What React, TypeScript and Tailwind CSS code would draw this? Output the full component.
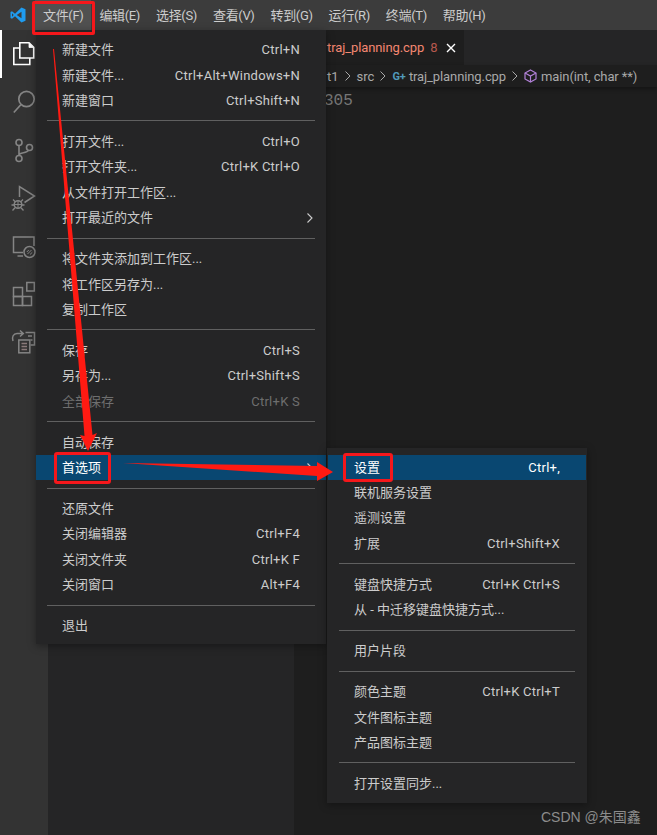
import React from "react";

const FONT = "font-['Roboto','Noto_Sans_CJK_SC',sans-serif]";

type Item = { t?: string; k?: string; sep?: boolean; arrow?: boolean; dis?: boolean; hi?: boolean };

const mainMenu: Item[] = [
  { t: "新建文件", k: "Ctrl+N" },
  { t: "新建文件...", k: "Ctrl+Alt+Windows+N" },
  { t: "新建窗口", k: "Ctrl+Shift+N" },
  { sep: true },
  { t: "打开文件...", k: "Ctrl+O" },
  { t: "打开文件夹...", k: "Ctrl+K Ctrl+O" },
  { t: "从文件打开工作区..." },
  { t: "打开最近的文件", arrow: true },
  { sep: true },
  { t: "将文件夹添加到工作区..." },
  { t: "将工作区另存为..." },
  { t: "复制工作区" },
  { sep: true },
  { t: "保存", k: "Ctrl+S" },
  { t: "另存为...", k: "Ctrl+Shift+S" },
  { t: "全部保存", k: "Ctrl+K S", dis: true },
  { sep: true },
  { t: "自动保存" },
  { t: "首选项", arrow: true, hi: true },
  { sep: true },
  { t: "还原文件" },
  { t: "关闭编辑器", k: "Ctrl+F4" },
  { t: "关闭文件夹", k: "Ctrl+K F" },
  { t: "关闭窗口", k: "Alt+F4" },
  { sep: true },
  { t: "退出" },
];

const subMenu: Item[] = [
  { t: "设置", k: "Ctrl+,", hi: true },
  { t: "联机服务设置" },
  { t: "遥测设置" },
  { t: "扩展", k: "Ctrl+Shift+X" },
  { sep: true },
  { t: "键盘快捷方式", k: "Ctrl+K Ctrl+S" },
  { t: "从 - 中迁移键盘快捷方式..." },
  { sep: true },
  { t: "用户片段" },
  { sep: true },
  { t: "颜色主题", k: "Ctrl+K Ctrl+T" },
  { t: "文件图标主题" },
  { t: "产品图标主题" },
  { sep: true },
  { t: "打开设置同步..." },
];

function MenuRows({ items }: { items: Item[] }) {
  return (
    <>
      {items.map((it, i) =>
        it.sep ? (
          <div key={i} className="h-[15.6px] flex items-center pl-[10.500px] pr-[11.500px]">
            <div className="h-px w-full bg-[#606060]" />
          </div>
        ) : (
          <div
            key={i}
            className={
              "h-[25.4px] flex items-center justify-between pl-[26px] pr-[26px] relative " +
              (it.hi ? "bg-[#094771] text-white " : "") +
              (it.dis ? "text-[#6e6e6e]" : it.hi ? "" : "text-[#cccccc]")
            }
          >
            <span>{it.t}</span>
            {it.k && <span className="tracking-[0.25px]">{it.k}</span>}
            {it.arrow && (
              <svg className="absolute right-[12px] top-[7px]" width="8" height="12" viewBox="0 0 8 12" fill="none">
                <path d="M1.500 1.500 6 6l-4.500 4.500" stroke="#cccccc" strokeWidth="1.100" />
              </svg>
            )}
          </div>
        )
      )}
    </>
  );
}

const titles = ["文件(F)", "编辑(E)", "选择(S)", "查看(V)", "转到(G)", "运行(R)", "终端(T)", "帮助(H)"];

function ActivityIcons() {
  const c = "#858585";
  return (
    <svg width="48" height="340" viewBox="0 30 48 340" fill="none" className="block">
      {/* files */}
      <g stroke="#ffffff" strokeWidth="1.600">
        <path d="M19.800 58V42.800H29L33.700 47.400V58Z" />
        <path d="M29 43v4.500h4.500V47L29 43Z" fill="#ffffff" strokeWidth="0.800" />
        <path d="M19.800 48H13.800V64.500H29.800V58" />
      </g>
      {/* search */}
      <g stroke={c} strokeWidth="1.700">
        <circle cx="26.500" cy="99" r="7.700" />
        <path d="M20.800 104.800 13.800 112.500" />
      </g>
      {/* git */}
      <g stroke={c} strokeWidth="1.600">
        <circle cx="19" cy="142.500" r="3" />
        <circle cx="29.500" cy="147.500" r="3" />
        <circle cx="19" cy="158.500" r="3" />
        <path d="M19 145.500v10M19 155c1-3.500 8-1 9.500-5" />
      </g>
      {/* debug */}
      <g stroke={c} strokeWidth="1.500">
        <path d="M19.500 197V186.500L34.500 196 24.500 202.500" />
        <circle cx="18" cy="204.500" r="3.800" fill="#333333" />
        <path d="M14.500 204.500h7M18 201v7" strokeWidth="1" />
        <path d="M13 199.500l2.500 2.500M23 199.500l-2.500 2.500M11.500 205h2.500M22 205h2.500M12.500 210.500l2.500-2.800M23.500 210.500l-2.500-2.800" strokeWidth="1.300" />
      </g>
      {/* remote */}
      <g stroke={c} strokeWidth="1.500">
        <path d="M23 252.500H13.500V237H34V246" />
        <path d="M17.500 256H23" />
        <circle cx="29.500" cy="252" r="5.500" />
        <path d="M27.500 254l4-4M26.800 252l2-2M30 254.500l2.300-2.200" strokeWidth="1" />
      </g>
      {/* extensions */}
      <g stroke={c} strokeWidth="1.500">
        <rect x="13.500" y="287.500" width="9" height="9" />
        <rect x="13.500" y="296.500" width="9" height="9" />
        <rect x="22.500" y="296.500" width="9" height="9" />
        <rect x="26.800" y="282.500" width="7.500" height="8.500" />
      </g>
      {/* timeline / docs */}
      <g stroke={c} strokeWidth="1.500">
        <path d="M25.500 332.500H34.500V345H30.500M28 336h4M30.500 340h2" />
        <rect x="18.800" y="340" width="11" height="12.800" fill="#333333" />
        <path d="M21.500 343.500h5.500M21.500 346.500h5.500M21.500 349.500h5.500" stroke="#8a7a7a" />
        <path d="M13 341c-1.500-4 .500-7.500 4-7.500h6M20 330.500l3.300 3-3.300 3" />
      </g>
    </svg>
  );
}

function VsLogo() {
  return (
    <svg width="16" height="16" viewBox="0 0 16 16">
      <path d="M11.500 0.500 5 6.700 2 4.300 0.500 5.100v5.800L2 11.700 5 9.300l6.500 6.200L15.500 13.700V2.300Z" fill="#1f9cf0" />
      <path d="M11.500 4.700 6.700 8l4.800 3.300Z" fill="#3c3c3c" />
      <path d="M2 6.200 3.700 8 2 9.800Z" fill="#3c3c3c" />
    </svg>
  );
}

function Chev() {
  return (
    <svg className="mx-[5px]" width="8" height="12" viewBox="0 0 8 12" fill="none">
      <path d="M1.500 1.500 6 6l-4.500 4.500" stroke="#a9a9a9" strokeWidth="1" />
    </svg>
  );
}

export default function App() {
  return (
    <div className={"relative w-[657px] h-[835px] overflow-hidden flex flex-col bg-[#1e1e1e] text-[13px] leading-none " + FONT}>
      {/* title bar */}
      <div className="h-[30px] bg-[#3c3c3c] flex items-center shrink-0 text-[#cccccc]">
        <div className="w-[35px] flex justify-center pl-[1px]">
          <VsLogo />
        </div>
        {titles.map((t, i) => (
          <div
            key={t}
            className={"h-[30px] px-[8px] flex items-center tracking-[-0.35px] " + (i === 0 ? "bg-[#505050]" : "")}
          >
            {t}
          </div>
        ))}
      </div>

      <div className="flex flex-1 min-h-0">
        {/* activity bar */}
        <div className="w-[48px] bg-[#333333] relative shrink-0">
          <ActivityIcons />
          <div className="absolute left-0 top-0 w-[2px] h-[48px] bg-white" />
        </div>
        {/* sidebar */}
        <div className="w-[246px] bg-[#252526] shrink-0" />
        {/* editor */}
        <div className="flex-1 min-w-0 flex flex-col bg-[#1e1e1e]">
          <div className="h-[35px] bg-[#252526] flex shrink-0">
            <div className="w-[170px] bg-[#1e1e1e] flex items-center pl-[33px] whitespace-nowrap">
              <span className="text-[#f48771] tracking-[-0.1px]">traj_planning.cpp</span>
              <span className="text-[#b5574d] ml-[6px]">8</span>
              <svg className="ml-[9px]" width="10" height="10" viewBox="0 0 10 10">
                <path d="M1 1l8 8M9 1l-8 8" stroke="#ffffff" strokeWidth="1.400" />
              </svg>
            </div>
          </div>
          <div className="h-[22px] flex items-center pl-[33px] text-[#a9a9a9] whitespace-nowrap shrink-0 shadow-[0_2px_4px_rgba(0,0,0,0.35)]">
            <span>t1</span>
            <Chev />
            <span>src</span>
            <Chev />
            <span className="text-[#519aba] text-[11px] font-bold mr-[3px]">G+</span>
            <span className="tracking-[-0.1px]">traj_planning.cpp</span>
            <Chev />
            <svg className="mr-[4px]" width="13" height="14" viewBox="0 0 13 14" fill="none" stroke="#b180d7" strokeWidth="1.200">
              <path d="M6.500 1 12 4v6l-5.500 3L1 10V4Z" />
              <path d="M1 4l5.500 3L12 4M6.500 7v6" />
            </svg>
            <span className="tracking-[-0.1px]">main(int, char **)</span>
          </div>
          <div className="pl-[30px] pt-[6px] font-['Liberation_Mono',monospace] text-[16px] leading-[16px] text-[#777777]">305</div>
        </div>
      </div>

      {/* file menu */}
      <div className="absolute left-[36px] top-[30px] w-[290px] h-[614px] pt-[7px] bg-[#252526] shadow-[0_2px_8px_rgba(0,0,0,0.36)]">
        <MenuRows items={mainMenu} />
      </div>
      {/* submenu */}
      <div className="absolute left-[327px] top-[448px] w-[260px] h-[355px] pt-[6.500px] px-[1px] bg-[#252526] shadow-[0_2px_8px_rgba(0,0,0,0.36)]">
        <MenuRows items={subMenu} />
      </div>

      {/* watermark */}
      <div className="absolute left-[541px] top-[810px] text-[14px] leading-[14px] text-[#8c8c8c] whitespace-nowrap font-['Liberation_Sans','Noto_Sans_CJK_SC',sans-serif]">
        CSDN @朱国鑫
      </div>

      {/* annotations */}
      <div className="absolute left-[32px] top-[1px] w-[63px] h-[34px] border-[3px] border-[#f5171b] rounded-[2px]" />
      <div className="absolute left-[54px] top-[452px] w-[57px] h-[32px] border-[3px] border-[#f5171b] rounded-[3px]" />
      <div className="absolute left-[343px] top-[453px] w-[50px] h-[29px] border-[3px] border-[#f5171b] rounded-[3px]" />
      <svg className="absolute left-0 top-0" width="657" height="835" viewBox="0 0 657 835">
        <path d="M53 49 L84.500 436 L80 435 L88 451 L97 433 L92.500 435 L54 49Z" fill="#ff1a12" />
        <path d="M123 463 L317 466 L317 462 L333 472 L317 481 L317 476 Z" fill="#ff1a12" />
      </svg>
    </div>
  );
}
